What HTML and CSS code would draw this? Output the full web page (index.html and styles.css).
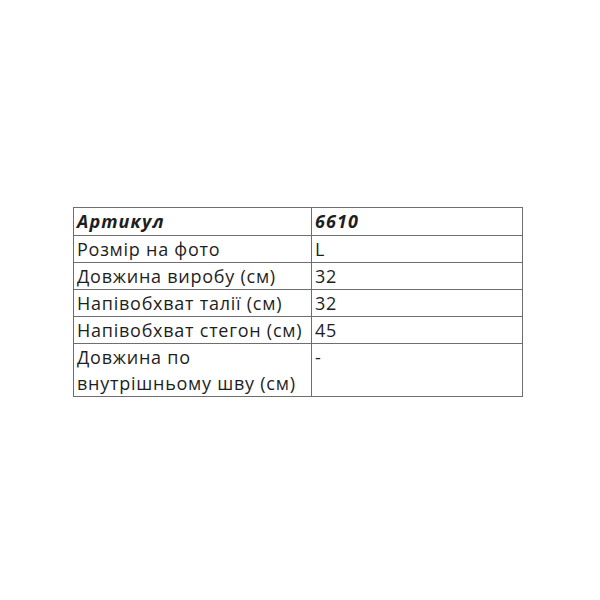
FILE: index.html
```html
<!DOCTYPE html>
<html>
<head>
<meta charset="utf-8">
<link rel="stylesheet" href="styles.css">
</head>
<body>
<div class="page">
<table class="specs">
<tr class="head"><td class="k">Артикул</td><td class="v">6610</td></tr>
<tr><td class="k">Розмір на фото</td><td class="v">L</td></tr>
<tr><td class="k">Довжина виробу (см)</td><td class="v">32</td></tr>
<tr><td class="k">Напівобхват талії (см)</td><td class="v">32</td></tr>
<tr><td class="k">Напівобхват стегон (см)</td><td class="v">45</td></tr>
<tr><td class="k">Довжина по<br>внутрішньому шву (см)</td><td class="v">-</td></tr>
</table>
</div>
</body>
</html>
```
FILE: styles.css
```css
html, body { margin: 0; padding: 0; background: #fff; }
.page { width: 600px; height: 600px; padding-top: 207px; padding-left: 73px; box-sizing: border-box; }
.specs {
  border-collapse: collapse;
  table-layout: fixed;
  font-family: "Open Sans", sans-serif;
  font-size: 18px;
  letter-spacing: 0.75px;
  color: #1e1e1e;
}
.specs td {
  border: 1px solid #6e6e6e;
  padding: 0 3px;
  height: 26px;
  line-height: 26px;
  vertical-align: top;
  white-space: nowrap;
  overflow: visible;
}
.specs .k { width: 231px; }
.specs .v { width: 204px; }
.head td { font-style: italic; font-weight: bold; height: 27px; letter-spacing: 1.1px; }
```
